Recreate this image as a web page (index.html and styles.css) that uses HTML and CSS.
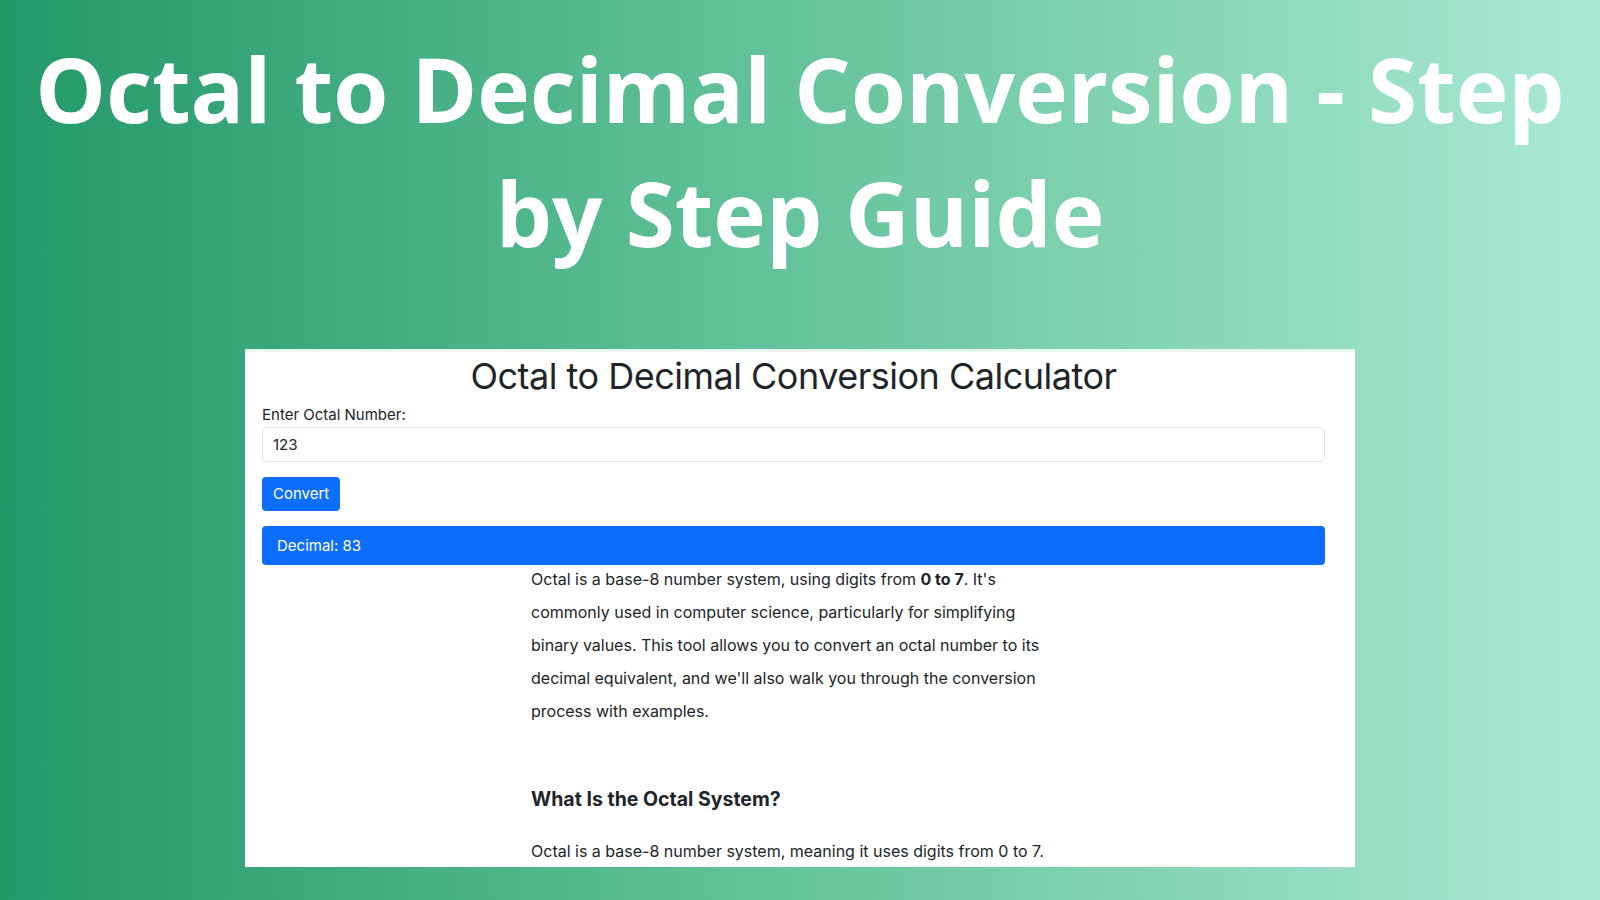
FILE: index.html
```html
<!DOCTYPE html>
<html lang="en">
<head>
<meta charset="utf-8">
<title>Octal to Decimal Conversion - Step by Step Guide</title>
<link rel="stylesheet" href="styles.css">
</head>
<body>
<div class="page">
  <h1 class="hero">Octal to Decimal Conversion - Step by Step Guide</h1>
  <div class="card">
    <h2 class="calc-title">Octal to Decimal Conversion Calculator</h2>
    <label class="field-label" for="octal">Enter Octal Number:</label>
    <div class="input" id="octal">123</div>
    <div class="btn">Convert</div>
    <div class="result">Decimal: 83</div>
    <div class="article">
      <p class="lead">Octal is a base-8 number system, using digits from <b>0 to 7</b>. It's commonly used in computer science, particularly for simplifying binary values. This tool allows you to convert an octal number to its decimal equivalent, and we'll also walk you through the conversion process with examples.</p>
      <h3 class="section">What Is the Octal System?</h3>
      <p class="body">Octal is a base-8 number system, meaning it uses digits from 0 to 7.</p>
    </div>
  </div>
</div>
</body>
</html>
```
FILE: styles.css
```css
html, body {
  margin: 0;
  padding: 0;
}
body {
  width: 1600px;
  height: 900px;
  overflow: hidden;
  background: linear-gradient(90deg, #239869 0%, #5fc096 45%, #abe9d3 100%);
}
.page {
  display: flex;
  flex-direction: column;
  height: 900px;
}
.hero {
  margin: 27px 0 0 0;
  padding: 0 10px;
  color: #ffffff;
  font-family: "Open Sans", sans-serif;
  font-weight: 700;
  font-size: 89px;
  line-height: 124px;
  text-align: center;
  letter-spacing: 0;
}
.card {
  box-sizing: border-box;
  margin: 74px 0 0 245px;
  width: 1110px;
  height: 518px;
  padding: 0 30px 0 17px;
  background: #ffffff;
  border-top: 3px solid #e8f9f1;
  overflow: hidden;
  font-family: Inter, sans-serif;
  color: #212529;
  display: flex;
  flex-direction: column;
  flex-shrink: 0;
}
.calc-title {
  margin: 2px 0 0 0;
  font-weight: 400;
  font-size: 36px;
  line-height: 44px;
  text-align: center;
  letter-spacing: -0.5px;
}
.field-label {
  margin-top: 7px;
  font-size: 15px;
  line-height: 20px;
}
.input {
  box-sizing: border-box;
  margin-top: 2px;
  height: 35px;
  border: 1px solid #dee2e6;
  border-radius: 5px;
  padding: 0 10px;
  font-size: 15px;
  line-height: 33px;
}
.btn {
  margin-top: 15px;
  align-self: flex-start;
  height: 34px;
  padding: 0 11px;
  background: #0d6efd;
  color: #ffffff;
  border-radius: 4px;
  font-size: 15px;
  line-height: 34px;
}
.result {
  margin-top: 15px;
  height: 39px;
  background: #0d6efd;
  color: #ffffff;
  border-radius: 4px;
  padding: 0 15px;
  font-size: 15px;
  line-height: 39px;
}
.article {
  margin-left: 269px;
  width: 520px;
  font-size: 16px;
}
.lead {
  margin: -2px 0 0 0;
  line-height: 33px;
}
.section {
  margin: 56px 0 0 0;
  font-size: 19.5px;
  font-weight: 700;
  line-height: 30px;
}
.body {
  margin: 21px 0 0 0;
  line-height: 33px;
}
```
